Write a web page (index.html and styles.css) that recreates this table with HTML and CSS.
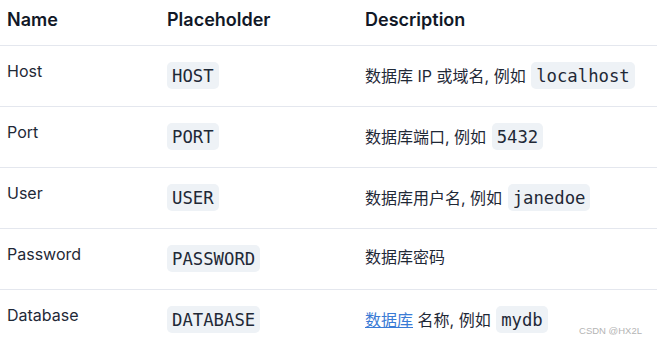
FILE: index.html
```html
<!DOCTYPE html>
<html lang="zh-CN">
<head>
<meta charset="utf-8">
<title>Placeholders</title>
<link rel="stylesheet" href="styles.css">
</head>
<body>
<div class="table">
  <div class="row head">
    <div class="cell">Name</div>
    <div class="cell">Placeholder</div>
    <div class="cell">Description</div>
  </div>
  <div class="row">
    <div class="cell name">Host</div>
    <div class="cell"><code>HOST</code></div>
    <div class="cell desc">数据库 IP 或域名, 例如 <code>localhost</code></div>
  </div>
  <div class="row">
    <div class="cell name">Port</div>
    <div class="cell"><code>PORT</code></div>
    <div class="cell desc">数据库端口, 例如 <code>5432</code></div>
  </div>
  <div class="row">
    <div class="cell name">User</div>
    <div class="cell"><code>USER</code></div>
    <div class="cell desc">数据库用户名, 例如 <code>janedoe</code></div>
  </div>
  <div class="row">
    <div class="cell name">Password</div>
    <div class="cell"><code>PASSWORD</code></div>
    <div class="cell desc">数据库密码</div>
  </div>
  <div class="row last">
    <div class="cell name">Database</div>
    <div class="cell"><code>DATABASE</code></div>
    <div class="cell desc"><a href="#">数据库</a> 名称, 例如 <code>mydb</code></div>
  </div>
</div>
<div class="watermark">CSDN @HX2L</div>
</body>
</html>
```

FILE: styles.css
```css
html, body {
  margin: 0;
  padding: 0;
  background: #ffffff;
  overflow: hidden;
}

body {
  font-family: Inter, "Noto Sans CJK SC", sans-serif;
  font-size: 16px;
  line-height: 24px;
  color: #1f2937;
  position: relative;
  height: 345px;
}

.table {
  display: flex;
  flex-direction: column;
}

.row {
  display: grid;
  grid-template-columns: 160px 198px 1fr;
  align-items: start;
  height: 61px;
  box-sizing: border-box;
  border-bottom: 1px solid #e4e7ee;
}

.row.head {
  height: 46px;
}

.row.last {
  border-bottom: none;
}

.cell {
  padding: 16px 7px 0;
}

.head .cell {
  padding-top: 8px;
  font-size: 18px;
  font-weight: 600;
  color: #111827;
}

.cell.name {
  padding-top: 13px;
}

code {
  display: inline-block;
  font-family: "DejaVu Sans Mono", monospace;
  font-size: 17.3px;
  line-height: 20px;
  padding: 3.5px 5px;
  background: #eef2f6;
  border-radius: 5px;
  color: #1f2937;
}

.desc code {
  margin-left: 1px;
}

a {
  color: #3a7bd5;
  text-decoration: underline;
}

.watermark {
  position: absolute;
  right: 15px;
  bottom: 9px;
  font-family: "Liberation Sans", sans-serif;
  font-size: 9.5px;
  line-height: 10px;
  color: #b4b4b4;
}
```
